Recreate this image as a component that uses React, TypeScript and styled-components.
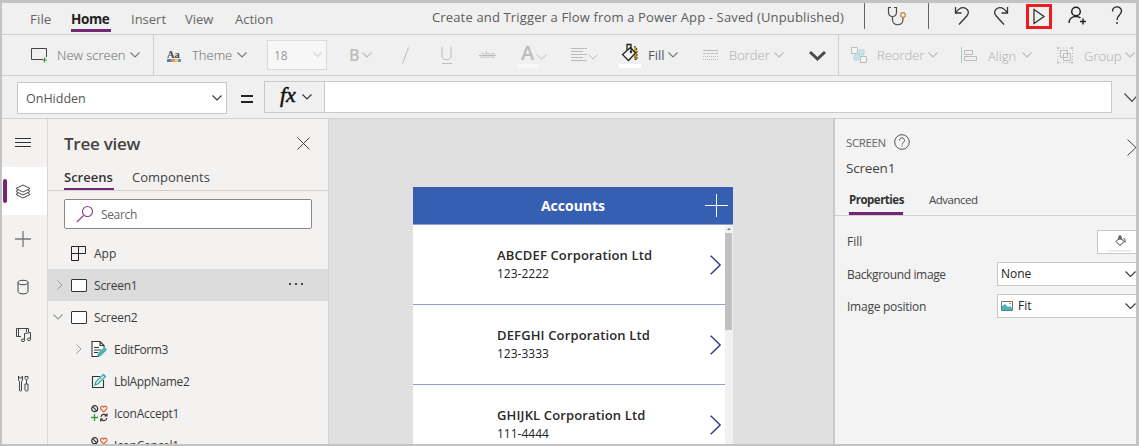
import React from 'react';
import styled, { createGlobalStyle } from 'styled-components';

const GlobalStyle = createGlobalStyle`
  * { box-sizing: border-box; }
  body { margin: 0; overflow: hidden; font-family: "Open Sans", "Noto Sans", sans-serif; }
  svg { display: block; flex: none; overflow: visible; }
`;

/* ---------- shared parts ---------- */

const Frame = styled.div`
  width: 1139px;
  height: 446px;
  display: flex;
  flex-direction: column;
  overflow: hidden;
  border-style: solid;
  border-color: #c3c3c3;
  border-width: 3px 3px 2px 2px;
  background: #f0f0f0;
`;

const Label = styled.span<{ $size?: number; $color?: string; $weight?: number; $track?: number; $drop?: number }>`
  display: block;
  font-size: ${p => p.$size ?? 12}px;
  line-height: 18px;
  color: ${p => p.$color ?? '#3c3c3c'};
  font-weight: ${p => p.$weight ?? 400};
  letter-spacing: ${p => p.$track ?? 0}px;
  padding-top: ${p => p.$drop ?? 0}px;
  white-space: nowrap;
`;

const Stroke = ({ w, h, d, color = '#444', sw = 1, children }: {
  w: number; h: number; d?: string; color?: string; sw?: number; children?: React.ReactNode;
}) => (
  <svg width={w} height={h} viewBox={`0 0 ${w} ${h}`} fill="none" stroke={color} strokeWidth={sw}>
    {d && <path d={d} />}
    {children}
  </svg>
);

const ChevronDown = ({ color = '#777', w = 10, sw = 1.1 }: { color?: string; w?: number; sw?: number }) => (
  <Stroke w={w} h={w / 2 + 1} color={color} sw={sw} d={`M.5 .5L${w / 2} ${w / 2}L${w - 0.5} .5`} />
);

/* ---------- menu bar ---------- */

const MenuBar = styled.header`
  height: 32px;
  flex: none;
  display: flex;
  border-bottom: 1px solid #d0d0d0;
`;

const MenuTab = styled.a<{ $w: number; $gap: number; $active?: boolean }>`
  width: ${p => p.$w}px;
  margin-left: ${p => p.$gap}px;
  height: 29px;
  padding-top: 7px;
  border-bottom: 3px solid ${p => (p.$active ? '#742774' : 'transparent')};
`;

const AppTitle = styled.div`
  width: 432px;
  margin-left: 158px;
  padding-top: 5px;
`;

const MenuDivider = styled.i<{ $before?: number; $after: number }>`
  width: 1px;
  height: 26px;
  margin-left: ${p => p.$before ?? 0}px;
  margin-right: ${p => p.$after}px;
  background: #666;
`;

const MenuIcon = styled.button<{ $w: number; $boxed?: boolean }>`
  width: ${p => p.$w}px;
  height: 25px;
  margin-top: ${p => (p.$boxed ? 1 : 0)}px;
  padding: 0;
  display: flex;
  align-items: center;
  justify-content: center;
  background: none;
  border: ${p => (p.$boxed ? '3px solid #ec1c24' : '0')};
`;

/* ---------- toolbar ---------- */

const Toolbar = styled.div`
  height: 41px;
  flex: none;
  display: flex;
  overflow: hidden;
  border-bottom: 1px solid #d0d0d0;
`;

const ToolGroup = styled.div<{ $w: number; $pad: number; $divided?: boolean }>`
  width: ${p => p.$w}px;
  flex: none;
  padding-left: ${p => p.$pad}px;
  display: flex;
  align-items: center;
  border-right: ${p => (p.$divided ? '1px solid #cfcfcf' : '0')};
`;

const ToolIcon = styled.span<{ $w: number }>`
  width: ${p => p.$w}px;
  flex: none;
`;

const ToolText = styled.span<{ $w: number }>`
  width: ${p => p.$w}px;
  flex: none;
  display: flex;
`;

const SizeBox = styled.div`
  width: 60px;
  height: 30px;
  padding: 0 4px 0 6px;
  display: flex;
  align-items: center;
  justify-content: space-between;
  border: 1px solid #dadada;
  background: #f7f7f7;
`;

/* ---------- formula bar ---------- */

const FormulaBar = styled.div`
  height: 43px;
  flex: none;
  display: flex;
  overflow: hidden;
  padding: 5px 0 0 15px;
  border-bottom: 1px solid #d0d0d0;
`;

const PropertySelect = styled.div`
  width: 210px;
  height: 32px;
  margin-top: 1px;
  padding: 0 4px 0 8px;
  display: flex;
  flex: none;
  align-items: center;
  justify-content: space-between;
  border: 1px solid #c8c8c8;
  background: #fff;
`;

const EqualsCell = styled.div`
  width: 37px;
  flex: none;
  padding: 14px 0 0 14px;
`;

const FxButton = styled.div`
  width: 60px;
  height: 32px;
  flex: none;
  display: flex;
  align-items: center;
  padding-left: 15px;
  border: 1px solid #c8c8c8;
  border-right: 0;
`;

const FxGlyph = styled.span`
  width: 22px;
  margin-top: -4px;
  font: italic 400 22px/24px "Liberation Serif", serif;
  -webkit-text-stroke: 0.5px #111;
  color: #111;
`;

const FormulaInput = styled.div`
  width: 788px;
  height: 32px;
  flex: none;
  margin-right: 12px;
  border: 1px solid #c8c8c8;
  background: #fff;
`;

const ExpandCell = styled.div`
  padding-top: 12px;
`;

/* ---------- body ---------- */

const Body = styled.main`
  flex: 1;
  min-height: 0;
  display: flex;
`;

const Rail = styled.nav`
  width: 46px;
  flex: none;
  overflow: hidden;
  border-right: 1px solid #d8d8d8;
  background: #f3f2f1;
`;

const RailItem = styled.div<{ $active?: boolean }>`
  height: 48px;
  display: flex;
  align-items: center;
  padding-left: 1px;
  background: ${p => (p.$active ? '#fff' : 'transparent')};
`;

const RailMark = styled.i<{ $active?: boolean }>`
  width: 4px;
  height: 24px;
  border-radius: 2px;
  background: ${p => (p.$active ? '#742774' : 'transparent')};
`;

const RailIcon = styled.span`
  width: 32px;
  display: flex;
  justify-content: center;
`;

const TreePanel = styled.section`
  width: 281px;
  flex: none;
  overflow: hidden;
  border-right: 1px solid #d4d4d4;
  background: #f3f2f1;
`;

const TreeHeader = styled.div`
  height: 49px;
  display: flex;
  align-items: center;
  justify-content: space-between;
  padding: 0 18px 0 16px;
`;

const TreeTabs = styled.div`
  height: 23px;
  display: flex;
  padding-left: 16px;
  border-bottom: 1px solid #d0d0d0;
`;

const TreeTab = styled.div<{ $active?: boolean }>`
  width: ${p => (p.$active ? 50 : 80)}px;
  height: 22px;
  margin-right: 18px;
  border-bottom: ${p => (p.$active ? '2px solid #742774' : '0')};
`;

const SearchBox = styled.div`
  width: 248px;
  height: 30px;
  margin: 8px 0 8px 16px;
  padding-left: 12px;
  display: flex;
  align-items: center;
  gap: 8px;
  border: 1px solid #8a8886;
  border-radius: 2px;
  background: #fff;
`;

const TreeRow = styled.div<{ $selected?: boolean }>`
  height: 32px;
  display: flex;
  align-items: center;
  background: ${p => (p.$selected ? '#dcdcdc' : 'transparent')};
`;

const Expander = styled.span<{ $nested?: boolean }>`
  width: ${p => (p.$nested ? 43 : 23)}px;
  flex: none;
  display: flex;
  justify-content: flex-end;
  padding-right: ${p => (p.$nested ? 9 : 8)}px;
`;

const TreeIcon = styled.span`
  width: 23px;
  flex: none;
`;

const MoreDots = styled.span`
  margin-left: auto;
  padding: 0 25px 3px 0;
`;

/* ---------- canvas ---------- */

const Canvas = styled.section`
  width: 504px;
  flex: none;
  padding: 68px 0 0 84px;
  overflow: hidden;
  background: #e0e0e0;
`;

const Phone = styled.div`
  width: 320px;
  height: 260px;
  background: #fff;
`;

const PhoneHeader = styled.div`
  height: 38px;
  display: grid;
  grid-template-columns: 28px 1fr 28px;
  align-items: center;
  text-align: center;
  border-bottom: 1px solid #8b9fd0;
  background: #375fb1;
`;

const Gallery = styled.div`
  display: flex;
`;

const GalleryList = styled.div`
  width: 312px;
`;

const GalleryRow = styled.div`
  height: 80px;
  padding: 0 3px 0 84px;
  display: flex;
  justify-content: space-between;
  align-items: center;
  border-bottom: 1px solid #8f9bcb;
`;

const GalleryText = styled.div`
  display: flex;
  flex-direction: column;
  gap: 1px;
`;

const ScrollTrack = styled.div`
  width: 8px;
  height: 222px;
  padding-right: 1px;
  background: #f1f1f1;
`;

const ScrollUp = styled.div`
  height: 8px;
  padding: 3px 0 0 2px;
`;

const ScrollThumb = styled.div`
  height: 97px;
  background: #c1c1c1;
`;

/* ---------- properties ---------- */

const Props = styled.section`
  width: 303px;
  flex: none;
  overflow: hidden;
  border-left: 2px solid #c8c8c8;
  background: #f3f3f3;
`;

const PropsHeader = styled.div`
  height: 71px;
  display: flex;
  justify-content: space-between;
  padding: 15px 0 0 11px;
`;

const KindLine = styled.div`
  height: 25px;
  display: flex;
  gap: 8px;
`;

const CollapseCell = styled.div`
  padding-top: 5px;
`;

const PropTabs = styled.div`
  height: 26px;
  display: flex;
  gap: 26px;
  padding-left: 14px;
  border-bottom: 1px solid #d0d0d0;
`;

const PropTab = styled.div<{ $active?: boolean }>`
  width: 54px;
  height: 25px;
  padding-top: 1px;
  border-bottom: ${p => (p.$active ? '3px solid #742774' : '0')};
`;

const PropRows = styled.div`
  padding-top: 10px;
`;

const PropRow = styled.div`
  height: 32px;
  display: flex;
  align-items: center;
  justify-content: space-between;
  padding-left: 12px;
`;

const Field = styled.div<{ $w: number }>`
  width: ${p => p.$w}px;
  height: 24px;
  display: flex;
  align-items: center;
  justify-content: space-between;
  padding-left: 3px;
  border: 1px solid #c8c8c8;
  border-right: 0;
  background: #fff;
`;

const FieldValue = styled.span`
  display: flex;
  align-items: center;
  gap: 5px;
`;

const FillSwatch = styled.div`
  width: 25px;
  height: 15px;
  margin-left: 6px;
  padding-left: 8px;
  box-shadow: 0 2px 2px -1px #d8d8d8;
`;

/* ---------- icons ---------- */

const Bucket = () => (
  <svg width="22" height="25" viewBox="0 0 22 25">
    <path d="M15 3.5c2 .2 3 1.600 3 4v9h-3v-4" fill="#d6a62b" />
    <path d="M15 3.500c2 .2 3 1.600 3 4v9h-2v-3" fill="none" stroke="#333" strokeDasharray="2 1" />
    <path d="M11.500 4.500l5 5.500-7 7.500-6-6z" fill="#f7f7f7" stroke="#222" strokeWidth="1.300" />
    <path d="M8 7V1.500h4V9" fill="none" stroke="#222" strokeWidth="1.300" />
    <circle cx="12" cy="9" r="1.300" fill="#333" />
    <rect y="21" width="22" height="4" fill="#fff" />
  </svg>
);

const ScreenIcon = () => (
  <Stroke w={16} h={13} color="#333"><rect x=".5" y=".5" width="15" height="12" rx=".5" fill="#fff" /></Stroke>
);

const ControlsIcon = () => (
  <svg width="17" height="17" viewBox="0 0 17 17" fill="none">
    <circle cx="3.700" cy="3.700" r="3" stroke="#333" strokeWidth="1.200" />
    <path d="M1.600 1.600l4.200 4.200" stroke="#333" strokeWidth="1.200" />
    <path d="M12.700 7L9.700 4C8.800 2 11 .1 12.700 2c1.700-1.900 3.900 0 3 2z" stroke="#e8603c" strokeWidth="1.200" />
    <path d="M3.500 9v7M0 12.500h7" stroke="#2f9e3a" strokeWidth="1.300" />
    <path d="M10 12c.3-3 4-3.500 5.500-1.500M16 8.500V11h-2.500M15.700 13c-.3 3-4 3.500-5.500 1.500M9.700 16.500V14h2.500" stroke="#333" strokeWidth="1.200" />
  </svg>
);

const EditFormIcon = () => (
  <svg width="17" height="18" viewBox="0 0 17 18" fill="none">
    <path d="M8 16.500H1V1.500h8l4 4v2M9 1.500v4h4" fill="#fff" stroke="#333" strokeWidth="1.100" />
    <path d="M3 7.500h5M3 10h7M3 12.500h4" stroke="#333" />
    <path d="M6.500 16.500l1-3.500 6-5.500 2.200 2.200-6 5.800z" fill="#4cb5b5" stroke="#2f9c9c" strokeWidth=".7" />
  </svg>
);

const LabelIcon = () => (
  <svg width="16" height="16" viewBox="0 0 16 16" fill="none">
    <path d="M9 3.500H1.500v11h11V7" stroke="#333" strokeWidth="1.100" />
    <path d="M4 12l1-3.500 7.500-7 2 2-7.500 7.200z" fill="#d5efef" stroke="#2f9c9c" strokeWidth="1.100" />
  </svg>
);

const RailGlyphs: React.ReactNode[] = [
  <Stroke w={16} h={10} color="#333" d="M0 .5h16M0 4.500h16M0 8.500h16" />,
  <Stroke w={16} h={15} color="#444" d="M8 1l7 3.500-7 3.500-7-3.500zM3 6L1 7.500 8 11l7-3.500L13 6M3 9l-2 1.500L8 14l7-3.500L13 9" />,
  <Stroke w={16} h={16} color="#777" sw={1.300} d="M8 0v16M0 8h16" />,
  <Stroke w={12} h={16} color="#444" d="M1 3.500v9c0 3.200 10 3.200 10 0v-9"><ellipse cx="6" cy="3.500" rx="5" ry="2.200" /></Stroke>,
  <Stroke w={17} h={16} color="#444" d="M6 9.500H1.500v-8h12V5M3.500 2v7M11.500 2v3M9.500 13V6.500l6-1V12">
    <ellipse cx="8" cy="13.300" rx="1.600" ry="1.300" /><ellipse cx="14" cy="12.300" rx="1.600" ry="1.300" />
  </Stroke>,
  <Stroke w={12} h={17} color="#444" d="M1.500 1v4l1 1.500V15c0 1.500 2 1.500 2 0V6.500l1-1.500V1L4.500 3h-2zM9.500 9V5L8 3.500V1.500h3v2L9.500 5M8 9h3v6c0 1.500-3 1.500-3 0z" />,
];

/* ---------- data ---------- */

const accounts = [
  { name: 'ABCDEF Corporation Ltd', phone: '123-2222' },
  { name: 'DEFGHI Corporation Ltd', phone: '123-3333' },
  { name: 'GHIJKL Corporation Ltd', phone: '111-4444' },
];

const DIM = '#bcbcbc';

export default function App() {
  return (
    <>
      <GlobalStyle />
      <Frame>
        <MenuBar>
          <MenuTab $w={41} $gap={28}><Label $size={13.500} $color="#666">File</Label></MenuTab>
          <MenuTab $w={40} $gap={0} $active><Label $size={13.5} $color="#222" $weight={700} $track={-0.4}>Home</Label></MenuTab>
          <MenuTab $w={35} $gap={20}><Label $size={13} $color="#666">Insert</Label></MenuTab>
          <MenuTab $w={30} $gap={19}><Label $size={13} $color="#666">View</Label></MenuTab>
          <MenuTab $w={39} $gap={20}><Label $size={13} $color="#666">Action</Label></MenuTab>
          <AppTitle><Label $size={13} $color="#5c5c5c" $track={0.15}>Create and Trigger a Flow from a Power App - Saved (Unpublished)</Label></AppTitle>
          <MenuDivider $after={19} />
          <MenuIcon $w={25}>
            <Stroke w={20} h={20} color="#514a42" sw={1.200} d="M4 1.500H1.500V6c0 6 8 6 8 0V1.500H7M5.500 10.500v3c0 7 10.500 7 10.500 0v-2">
              <circle cx="16" cy="9" r="2.300" stroke="#c08a3c" />
            </Stroke>
          </MenuIcon>
          <MenuDivider $before={19} $after={20} />
          <MenuIcon $w={26}><Stroke w={16} h={19} color="#333" sw={1.300} d="M1.500 1v6h6M1.500 7C5 2 9 .8 12 2.500c3 2 3 5 .8 7.500L5 18.500" /></MenuIcon>
          <MenuIcon $w={51}><Stroke w={16} h={19} color="#333" sw={1.300} d="M14.500 1v6h-6M14.500 7C11 2 7 .8 4 2.500 1 4.500 1 7.500 3.200 10l7.800 8.500" /></MenuIcon>
          <MenuIcon $w={26} $boxed><Stroke w={14} h={17} color="#333" sw={1.300} d="M2 1.500v14L12 8.500z" /></MenuIcon>
          <MenuIcon $w={51}>
            <Stroke w={19} h={19} color="#222" sw={1.500} d="M1 17c0-4 3-6.500 7-6.500 2 0 3.500.6 4.500 1.500M15 12.500v6M12 15.500h6"><circle cx="8" cy="5.500" r="4.300" /></Stroke>
          </MenuIcon>
          <MenuIcon $w={27}>
            <Stroke w={12} h={19} color="#222" sw={1.300} d="M1.500 5.500C1.500-.5 10.500-.5 10.500 5c0 4-4.500 4-4.500 9M6 16v2" />
          </MenuIcon>
        </MenuBar>

        <Toolbar>
          <ToolGroup $w={152} $pad={29} $divided>
            <ToolIcon $w={26}>
              <Stroke w={17} h={15} color="#444"><path d="M12 11.500H.5V.5h15V9" /><path d="M13.500 9.500v5M11 12h5" stroke="#2f9e3a" strokeWidth="1.200" /></Stroke>
            </ToolIcon>
            <ToolText $w={73}><Label $size={13} $color="#666" $weight={300}>New screen</Label></ToolText>
            <ChevronDown />
          </ToolGroup>
          <ToolGroup $w={111} $pad={13}>
            <ToolIcon $w={25}>
              <svg width="15" height="13" viewBox="0 0 15 13">
                <text x="0" y="8.500" fontSize="10.500" fontWeight="700" fontFamily="Liberation Serif, serif" fill="#444">Aa</text>
                <path d="M0 10h4v3H0z" fill="#4a7fc0" /><path d="M4 10h4v3H4z" fill="#ee8a5a" /><path d="M8 10h3v3H8z" fill="#f3c98a" /><path d="M11 10h3v3h-3z" fill="#5ba3a0" />
              </svg>
            </ToolIcon>
            <ToolText $w={45}><Label $size={13} $color="#666" $weight={300}>Theme</Label></ToolText>
            <ChevronDown />
          </ToolGroup>
          <ToolGroup $w={82} $pad={2}>
            <SizeBox><Label $size={12} $color="#999" $drop={2}>18</Label><ChevronDown color="#d6d6d6" w={9} /></SizeBox>
          </ToolGroup>
          <ToolGroup $w={54} $pad={2}>
            <ToolText $w={13}><Label $size={16} $color={DIM} $weight={600}>B</Label></ToolText>
            <ChevronDown color={DIM} />
          </ToolGroup>
          <ToolGroup $w={40} $pad={1}><Stroke w={8} h={17} color={DIM} d="M.5 16.500L6.500 .5" /></ToolGroup>
          <ToolGroup $w={38} $pad={0}><Stroke w={12} h={17} color={DIM} d="M1 0v9c0 5 9 5 9 0V0M1 16.500h10" /></ToolGroup>
          <ToolGroup $w={38} $pad={0}>
            <svg width="17" height="12" viewBox="0 0 17 12">
              <text x="1" y="9" fontSize="9" fontFamily="Open Sans, sans-serif" fill={DIM}>abc</text>
              <path d="M0 6.500h17" stroke={DIM} />
            </svg>
          </ToolGroup>
          <ToolGroup $w={54} $pad={0}>
            <svg width="30" height="25" viewBox="0 0 30 25" fill="none">
              <text x="4" y="17" fontSize="20" fontWeight="600" fontFamily="Open Sans, sans-serif" fill={DIM}>A</text>
              <path d="M19.500 11.500l5 4.500 5-4.500" stroke={DIM} />
              <path d="M0 21h22v4H0z" fill="#f8f8f8" />
            </svg>
          </ToolGroup>
          <ToolGroup $w={48} $pad={0}>
            <Stroke w={27} h={14} color={DIM} d="M0 .5h16M0 3.500h12M0 6.500h16M0 9.500h12M0 12.500h16M17.500 6.500l4.500 4.500 4.500-4.500" />
          </ToolGroup>
          <ToolGroup $w={84} $pad={0}>
            <ToolIcon $w={29}><Bucket /></ToolIcon>
            <ToolText $w={20}><Label $size={13} $color="#556">Fill</Label></ToolText>
            <ChevronDown />
          </ToolGroup>
          <ToolGroup $w={106} $pad={0}>
            <ToolIcon $w={26}>
              <Stroke w={16} h={11} color={DIM}><path d="M0 .5h15" /><path d="M0 3.500h15" strokeDasharray="3 1" /><path d="M0 6.500h15M0 9.500h15" strokeDasharray="1 1" /></Stroke>
            </ToolIcon>
            <ToolText $w={45}><Label $size={13} $color="#adadad" $weight={300}>Border</Label></ToolText>
            <ChevronDown color={DIM} />
          </ToolGroup>
          <ToolGroup $w={30} $pad={0} $divided><Stroke w={17} h={12} color="#4a4a4a" sw={3} d="M1 3l7.500 7L16 3" /></ToolGroup>
          <ToolGroup $w={122} $pad={12}>
            <ToolIcon $w={26}>
              <Stroke w={17} h={17} color={DIM}>
                <path d="M8 3h5v5H8zM3 8h5v5H3z" fill="#c9e6e6" stroke="#b3dada" /><path d="M.5 .5h6v6h-6zM9.500 9.500h6v6h-6z" fill="#f4f4f4" />
              </Stroke>
            </ToolIcon>
            <ToolText $w={51}><Label $size={13} $color="#adadad" $weight={300}>Reorder</Label></ToolText>
            <ChevronDown color={DIM} />
          </ToolGroup>
          <ToolGroup $w={96} $pad={0}>
            <ToolIcon $w={27}>
              <Stroke w={17} h={16} color={DIM}><path d="M.5 0v16" stroke="#9fd0d0" /><path d="M3.500 3.500h8v4h-8zM3.500 9.500h12v4h-12z" /></Stroke>
            </ToolIcon>
            <ToolText $w={34}><Label $size={13} $color="#adadad" $weight={300} $drop={2}>Align</Label></ToolText>
            <ChevronDown color={DIM} />
          </ToolGroup>
          <ToolGroup $w={80} $pad={0}>
            <ToolIcon $w={27}>
              <Stroke w={17} h={17} color={DIM}><path d="M3.500 3.500h7v7h-7zM6.500 6.500h7v7h-7z" /><path d="M0 1h2M14 1h2M0 15.500h2M14 15.500h2" strokeWidth="2" /><path d="M1 3v11M15.500 3v11M3 1h10M3 15.500h10" strokeDasharray="1 2" /></Stroke>
            </ToolIcon>
            <ToolText $w={41}><Label $size={13} $color="#adadad" $weight={300} $drop={2}>Group</Label></ToolText>
            <ChevronDown color={DIM} />
          </ToolGroup>
        </Toolbar>

        <FormulaBar>
          <PropertySelect><Label $size={12.500} $color="#555" $drop={1}>OnHidden</Label><ChevronDown color="#333" /></PropertySelect>
          <EqualsCell><Stroke w={12} h={8} color="#222" sw={2} d="M0 1h12M0 7h12" /></EqualsCell>
          <FxButton><FxGlyph>fx</FxGlyph><ChevronDown color="#333" /></FxButton>
          <FormulaInput />
          <ExpandCell><Stroke w={14} h={10} color="#444" sw={1.200} d="M.5 .5l7.500 7.800L15 .5" /></ExpandCell>
        </FormulaBar>

        <Body>
          <Rail>
            {RailGlyphs.map((glyph, i) => (
              <RailItem key={i} $active={i === 1}><RailMark $active={i === 1} /><RailIcon>{glyph}</RailIcon></RailItem>
            ))}
          </Rail>

          <TreePanel>
            <TreeHeader>
              <Label $size={17} $weight={600} $color="#444" $track={-0.25}>Tree view</Label>
              <Stroke w={13} h={13} color="#444" d="M.5 .5l12 12M12.500 .5l-12 12" />
            </TreeHeader>
            <TreeTabs>
              <TreeTab $active><Label $size={13} $weight={600} $color="#333">Screens</Label></TreeTab>
              <TreeTab><Label $size={13} $color="#444">Components</Label></TreeTab>
            </TreeTabs>
            <SearchBox>
              <Stroke w={16} h={16} color="#8a3a8a" sw={1.100} d="M0 16l6.500-6.500"><circle cx="10.500" cy="5.500" r="5" /></Stroke>
              <Label $size={12} $color="#666" $drop={2} $track={-0.35}>Search</Label>
            </SearchBox>
            <TreeRow>
              <Expander />
              <TreeIcon><Stroke w={15} h={15} color="#222" d="M.5 .5h14v7H.5zM7.500 .5v14h-7v-7" /></TreeIcon>
              <Label $drop={2}>App</Label>
            </TreeRow>
            <TreeRow $selected>
              <Expander><Stroke w={6} h={10} color="#999" d="M.5 .5l4.500 4.500-4.500 4.500" /></Expander>
              <TreeIcon><ScreenIcon /></TreeIcon>
              <Label $drop={2} $track={-0.2}>Screen1</Label>
              <MoreDots><Stroke w={14} h={2} color="#444" sw={2} d="M0 1h2M6 1h2M12 1h2" /></MoreDots>
            </TreeRow>
            <TreeRow>
              <Expander><ChevronDown color="#999" w={10} /></Expander>
              <TreeIcon><ScreenIcon /></TreeIcon>
              <Label $drop={2} $track={-0.2}>Screen2</Label>
            </TreeRow>
            <TreeRow>
              <Expander $nested><Stroke w={6} h={10} color="#999" d="M.5 .5l4.500 4.500-4.500 4.500" /></Expander>
              <TreeIcon><EditFormIcon /></TreeIcon>
              <Label $drop={2} $track={-0.4}>EditForm3</Label>
            </TreeRow>
            <TreeRow>
              <Expander $nested />
              <TreeIcon><LabelIcon /></TreeIcon>
              <Label $drop={2} $track={-0.35}>LblAppName2</Label>
            </TreeRow>
            {['IconAccept1', 'IconCancel1'].map(name => (
              <TreeRow key={name}>
                <Expander $nested />
                <TreeIcon><ControlsIcon /></TreeIcon>
                <Label $drop={2} $track={-0.25}>{name}</Label>
              </TreeRow>
            ))}
          </TreePanel>

          <Canvas>
            <Phone>
              <PhoneHeader>
                <span />
                <Label $size={14} $weight={700} $color="#fff">Accounts</Label>
                <Stroke w={23} h={23} color="#fff" d="M11.500 0v23M0 11.500h23" />
              </PhoneHeader>
              <Gallery>
                <GalleryList>
                  {accounts.map(a => (
                    <GalleryRow key={a.name}>
                      <GalleryText>
                        <Label $size={13} $weight={600} $color="#2a2a2a" $track={0.14}>{a.name}</Label>
                        <Label $size={12} $color="#222">{a.phone}</Label>
                      </GalleryText>
                      <Stroke w={12} h={20} color="#1f2f8a" sw={1.300} d="M.7 .7L10.200 10 .7 19.300" />
                    </GalleryRow>
                  ))}
                </GalleryList>
                <ScrollTrack>
                  <ScrollUp><svg width="4" height="2"><path d="M0 2l2-2 2 2z" fill="#777" /></svg></ScrollUp>
                  <ScrollThumb />
                </ScrollTrack>
              </Gallery>
            </Phone>
          </Canvas>

          <Props>
            <PropsHeader>
              <div>
                <KindLine>
                  <Label $size={11.500} $color="#666" $track={-0.4}>SCREEN</Label>
                  <Stroke w={16} h={16} color="#555" d="M5.500 6.500c0-3.500 5-3.500 5 0 0 2-2.500 2-2.500 4M8 11.500v1"><circle cx="8" cy="8" r="7.300" /></Stroke>
                </KindLine>
                <Label $size={13.500} $color="#444" $track={-0.2}>Screen1</Label>
              </div>
              <CollapseCell><Stroke w={9} h={17} color="#444" d="M.5 .5L9 8.500l-8.500 8" /></CollapseCell>
            </PropsHeader>
            <PropTabs>
              <PropTab $active><Label $size={11.500} $weight={700} $color="#333" $track={-0.5}>Properties</Label></PropTab>
              <PropTab><Label $size={11.500} $color="#444" $track={-0.5}>Advanced</Label></PropTab>
            </PropTabs>
            <PropRows>
              <PropRow>
                <Label $color="#444">Fill</Label>
                <Field $w={39}>
                  <FillSwatch><Stroke w={11} h={11} color="#333" d="M5 2.500l4 4-4 4-4-4zM4 5V1h2v4M8.500 3.500c1.500 0 1.500 1 1.500 4" /></FillSwatch>
                </Field>
              </PropRow>
              <PropRow>
                <Label $color="#444" $track={-0.35} $drop={1}>Background image</Label>
                <Field $w={139}><Label $color="#222">None</Label><ChevronDown color="#333" w={11} /></Field>
              </PropRow>
              <PropRow>
                <Label $color="#444" $track={-0.25} $drop={1}>Image position</Label>
                <Field $w={139}>
                  <FieldValue>
                    <svg width="12" height="10" viewBox="0 0 12 10"><path d="M.5 .5h11v9H.5z" fill="#fff" stroke="#777" /><path d="M1 9V5l3-2 3 3 2-1 2 2v2z" fill="#45b8b8" /><path d="M8 2h2v1H8z" fill="#e59a3c" /></svg>
                    <Label $color="#222">Fit</Label>
                  </FieldValue>
                  <ChevronDown color="#333" w={11} />
                </Field>
              </PropRow>
            </PropRows>
          </Props>
        </Body>
      </Frame>
    </>
  );
}
